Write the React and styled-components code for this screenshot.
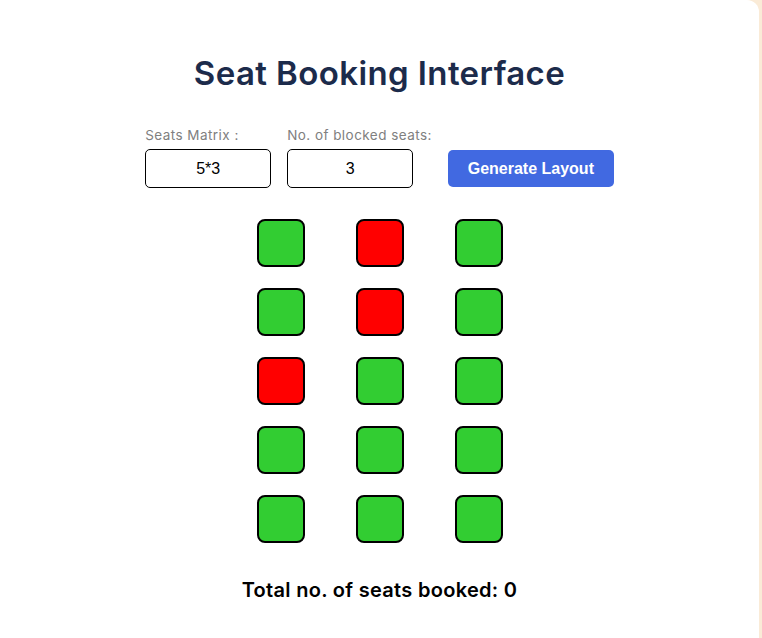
import React, { useState } from 'react';
import styled, { createGlobalStyle } from 'styled-components';

const GlobalStyle = createGlobalStyle`
  html, body {
    margin: 0;
    padding: 0;
    background: #faebd7;
  }
  * {
    box-sizing: border-box;
  }
`;

const Page = styled.div`
  width: 762px;
  height: 638px;
  overflow: hidden;
  display: flex;
`;

const Card = styled.div`
  width: 759px;
  height: 700px;
  background: #fff;
  border-top-right-radius: 12px;
  display: flex;
  flex-direction: column;
  align-items: center;
  padding-top: 52px;
  font-family: Inter, "Open Sans", sans-serif;
`;

const Title = styled.h1`
  font-family: Inter, "Open Sans", sans-serif;
  font-size: 33px;
  font-weight: 600;
  letter-spacing: 0.4px;
  color: #1c2b4b;
  margin: 0;
  line-height: 42px;
`;

const Controls = styled.div`
  display: flex;
  flex-direction: row;
  align-items: flex-end;
  gap: 16px;
  margin-top: 32px;
`;

const Field = styled.div`
  display: flex;
  flex-direction: column;
`;

const Label = styled.label`
  font-family: Inter, "Open Sans", sans-serif;
  font-size: 13.5px;
  letter-spacing: 0.45px;
  color: #808080;
  line-height: 18px;
  margin-bottom: 5px;
`;

const Input = styled.input`
  width: 126px;
  height: 39px;
  border: 1px solid #000;
  border-radius: 5px;
  text-align: center;
  font-family: "Liberation Sans", Arial, sans-serif;
  font-size: 16px;
  color: #000;
  outline: none;
`;

const Button = styled.button`
  width: 166px;
  height: 37px;
  margin-left: 0;
  margin-bottom: 1px;
  border: none;
  border-radius: 5px;
  background: #4169e1;
  color: #fff;
  font-family: "Liberation Sans", Arial, sans-serif;
  font-weight: 700;
  font-size: 16px;
  cursor: pointer;
`;

const Grid = styled.div`
  display: grid;
  grid-template-columns: repeat(3, 48px);
  column-gap: 51px;
  row-gap: 21px;
  margin-top: 31px;
`;

const Seat = styled.div`
  width: 48px;
  height: 48px;
  border: 2px solid #000;
  border-radius: 8px;
  background: ${(p) => (p.$blocked ? '#ff0000' : '#32cd32')};
`;

const Total = styled.p`
  font-family: Inter, "Open Sans", sans-serif;
  font-size: 20px;
  font-weight: 600;
  letter-spacing: 0.3px;
  color: #000;
  margin: 35px 0 0;
`;

const blocked = [1, 4, 6];

export default function App() {
  const [matrix, setMatrix] = useState('5*3');
  const [count, setCount] = useState('3');

  return (
    <Page>
      <GlobalStyle />
      <Card>
        <Title>Seat Booking Interface</Title>
        <Controls>
          <Field>
            <Label>Seats Matrix :</Label>
            <Input value={matrix} onChange={(e) => setMatrix(e.target.value)} />
          </Field>
          <Field>
            <Label>No. of blocked seats:</Label>
            <Input value={count} onChange={(e) => setCount(e.target.value)} />
          </Field>
          <Button>Generate Layout</Button>
        </Controls>
        <Grid>
          {Array.from({ length: 15 }).map((_, i) => (
            <Seat key={i} $blocked={blocked.includes(i)} />
          ))}
        </Grid>
        <Total>Total no. of seats booked: 0</Total>
      </Card>
    </Page>
  );
}
